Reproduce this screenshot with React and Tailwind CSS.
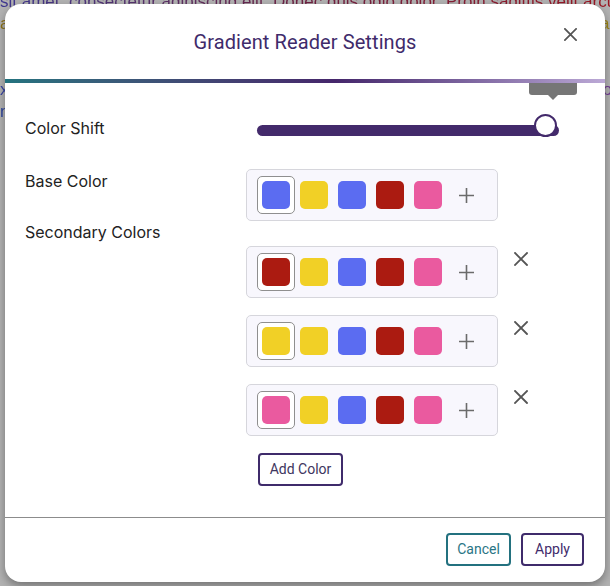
import React from "react";

const SWATCH = {
  blue: "bg-[#5b6cf1]",
  yellow: "bg-[#f1d026]",
  red: "bg-[#ab1b11]",
  pink: "bg-[#ea5a9f]",
};

function Swatch({ color, selected }) {
  return (
    <div
      className={
        "w-[38px] h-[38px] p-[4px] rounded-[5px] border " +
        (selected ? "border-[#8f8f8f] bg-white" : "border-transparent")
      }
    >
      <div className={"w-full h-full rounded-[5px] " + SWATCH[color]} />
    </div>
  );
}

function Palette({ first }) {
  return (
    <div className="w-[252px] h-[52px] flex items-center pl-[10px] rounded-[5px] border border-[#d6d6dc] bg-[#f8f7fd]">
      <Swatch color={first} selected />
      <Swatch color="yellow" />
      <Swatch color="blue" />
      <Swatch color="red" />
      <Swatch color="pink" />
      <div className="w-[38px] h-[38px] flex items-center justify-center">
        <svg width="17" height="17" viewBox="0 0 17 17" fill="none" stroke="#6b6b6b" strokeWidth="1.6">
          <path d="M8.5 1v15M1 8.5h15" />
        </svg>
      </div>
    </div>
  );
}

function XIcon({ size = 14, color = "#555", sw = 1.8 }) {
  return (
    <svg width={size} height={size} viewBox="0 0 14 14" fill="none" stroke={color} strokeWidth={sw} strokeLinecap="square">
      <path d="M1 1l12 12M13 1L1 13" />
    </svg>
  );
}

const bgLines = [
  { t: "sit amet, consectetur adipiscing elit. Donec quis odio dolor. Proin sagittis velit arcu, vitae", c: "from-[#5a4fcf] via-[#a0305f] to-[#e02030]" },
  { t: "aliquet lectus. Pellentesque habitant morbi tristique senectus et netus et malesuada fames ac", c: "from-[#c9a21c] via-[#d08030] to-[#e0c020]" },
  { t: "\u00a0", c: "from-[#ffffff] to-[#ffffff]" },
  { t: "\u00a0", c: "from-[#ffffff] to-[#ffffff]" },
  { t: "xvulputate sem sapien vitae nunc. Nulla facilisi. Sed convallis tincidunt lorem, in ornare", c: "from-[#5060e8] via-[#7050d0] to-[#a050d0]" },
  { t: "nibh volutpat vel. Suspendisse potenti. Maecenas sed lacus at magna posuere", c: "from-[#4060e0] via-[#6050d0] to-[#9050c0]" },
];

export default function App() {
  return (
    <div className="relative w-[610px] h-[586px] overflow-hidden bg-white font-['Roboto',sans-serif]">
      {/* background page */}
      <div className="-mt-[9px] font-['Liberation_Sans',Arial,sans-serif] text-[17px] leading-[22px]">
        {bgLines.map((l, i) => (
          <div key={i} className={"whitespace-nowrap bg-linear-to-r bg-clip-text text-transparent " + l.c}>
            {l.t}
          </div>
        ))}
      </div>

      {/* overlay */}
      <div className="absolute inset-0 bg-black/30" />

      {/* modal */}
      <div className="absolute left-[5px] top-[4px] w-[600px] h-[578px] rounded-[16px] bg-white shadow-[0_4px_10px_rgba(0,0,0,0.35)] flex flex-col overflow-hidden">
        <div className="relative h-[75px] flex items-center justify-center shrink-0">
          <h2 className="text-[20px] text-[#3f2b6b] tracking-[0.1px]">Gradient Reader Settings</h2>
          <button className="absolute right-[27px] top-[22px] w-[16px] h-[16px] flex items-center justify-center">
            <XIcon size={13} color="#555" sw={1.9} />
          </button>
        </div>
        <div className="h-[4px] shrink-0 bg-linear-to-r from-[#23737f] via-[#45266b] via-55% to-[#bca9d6]" />

        <div className="relative h-[434px] shrink-0 overflow-hidden px-[20px] pt-[25px] font-['Inter',sans-serif] text-[16px] text-[#222]">
          {/* Color shift */}
          <div className="flex items-center h-[40px]">
            <div className="w-[221px] shrink-0">Color Shift</div>
            <div className="relative ml-[11px] w-[302px] h-[40px]">
              <div className="absolute left-0 right-0 top-[17px] h-[11px] rounded-full bg-[#432a6b]" />
              <div className="absolute left-[277px] top-[6px] w-[23px] h-[23px] rounded-full bg-white border-[2.5px] border-[#432a6b]" />
              <div className="absolute left-[272px] top-[-32px] w-[48px] h-[19px] rounded-[3px] bg-[#767676] overflow-hidden">
                <div className="mt-[-5px] text-[#cfcfcf] font-['Roboto',sans-serif] text-[12px] leading-[14px] text-center">100</div>
              </div>
              <div className="absolute left-[291px] top-[-13px] w-0 h-0 border-l-[5px] border-r-[5px] border-t-[5px] border-l-transparent border-r-transparent border-t-[#767676]" />
            </div>
          </div>

          {/* Base color */}
          <div className="flex items-start mt-[21px]">
            <div className="w-[221px] shrink-0 pt-[2px] leading-[20px]">Base Color</div>
            <Palette first="blue" />
          </div>

          {/* Secondary label */}
          <div className="mt-[1px] h-[20px] leading-[20px]">Secondary Colors</div>

          <div className="flex mt-[4px]">
            <div className="w-[221px] shrink-0" />
            <div className="flex flex-col font-['Roboto',sans-serif]">
              <div className="flex flex-col gap-[17px]">
                {["red", "yellow", "pink"].map((c) => (
                  <div key={c} className="flex items-start">
                    <Palette first={c} />
                    <button className="ml-[16px] mt-[6px] w-[14px] h-[14px] flex items-center justify-center">
                      <XIcon size={14} color="#555" sw={1.8} />
                    </button>
                  </div>
                ))}
              </div>
              <button className="mt-[17px] ml-[12px] w-[85px] h-[33px] rounded-[4px] border-2 border-[#3f2b6b] text-[14px] text-[#3e3560]">
                Add Color
              </button>
            </div>
          </div>
        </div>

        <div className="h-px shrink-0 bg-[#8c8c8c]" />

        <div className="flex-1 flex justify-end items-start gap-[10px] pt-[15px] pr-[21px]">
          <button className="w-[65px] h-[33px] rounded-[4px] border-2 border-[#23717f] text-[14px] text-[#2a7585]">
            Cancel
          </button>
          <button className="w-[63px] h-[33px] rounded-[4px] border-2 border-[#3f2b6b] text-[14px] text-[#3f2b6b]">
            Apply
          </button>
        </div>
      </div>
    </div>
  );
}
